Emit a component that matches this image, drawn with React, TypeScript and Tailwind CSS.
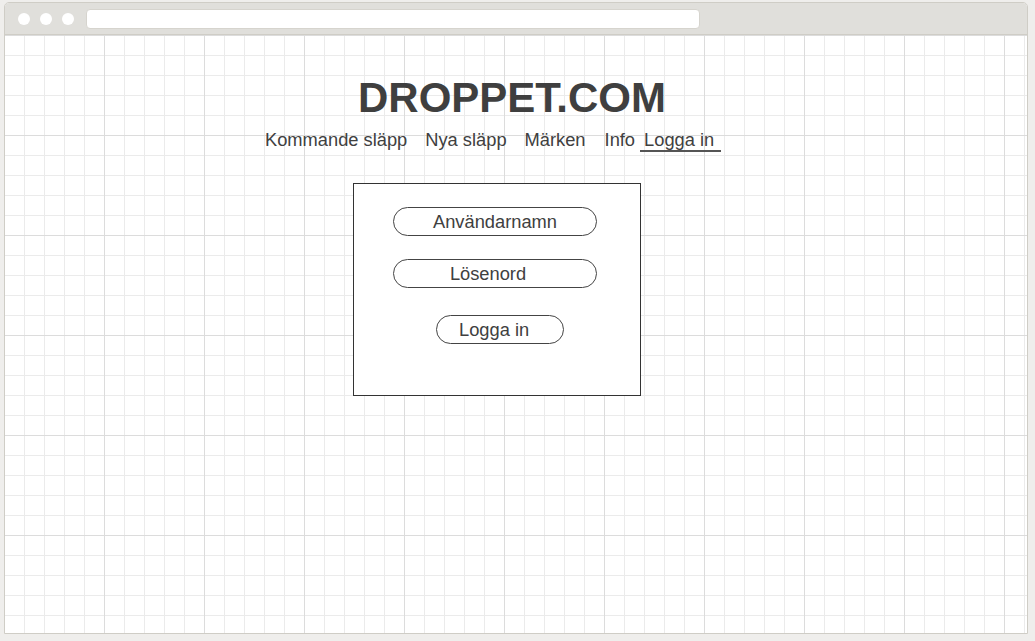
export default function App() {
    return (
        <div className="w-[1035px] h-[641px] overflow-hidden bg-[#efeeec] pt-[2px] pl-[4px] font-[Liberation_Sans,Arial,sans-serif] text-[#404040]">
            {/* browser window */}
            <div className="w-[1024px] h-[632px] flex flex-col border border-[#cfcdc6] rounded-t-[5px] bg-white">
                {/* title bar */}
                <div className="h-[32px] shrink-0 flex items-start bg-[#e0dfdb] border-b border-[#cfcdc6] rounded-t-[4px]">
                    <div className="flex gap-[10px] ml-[13px] mt-[10px]">
                        <span className="block w-[12px] h-[12px] rounded-full bg-white"/>
                        <span className="block w-[12px] h-[12px] rounded-full bg-white"/>
                        <span className="block w-[12px] h-[12px] rounded-full bg-white"/>
                    </div>
                    <div className="ml-[12px] mt-[6px] w-[614px] h-[20px] rounded-[4px] bg-white border border-[#d6d4ce]"/>
                </div>

                {/* page */}
                <div className="flex-1 flex flex-col items-start [background-image:linear-gradient(to_right,#dcdcdc_1px,transparent_1px),linear-gradient(to_bottom,#dcdcdc_1px,transparent_1px),linear-gradient(to_right,#ebebeb_1px,transparent_1px),linear-gradient(to_bottom,#ebebeb_1px,transparent_1px)] [background-size:100px_100px,100px_100px,20px_20px,20px_20px] [background-position:-1px_0]">
                    <h1 className="mt-[42px] ml-[353px] h-[42px] text-[42px] leading-[42px] font-bold text-[#3f3f3f]">
                        DROPPET.COM
                    </h1>

                    <ul className="mt-[10px] ml-[260px] flex items-start text-[18.3px] leading-[21px]">
                        <li><a href="#">Kommande släpp</a></li>
                        <li className="ml-[18px]"><a href="#">Nya släpp</a></li>
                        <li className="ml-[18px]"><a href="#">Märken</a></li>
                        <li className="ml-[19px]"><a href="#">Info</a></li>
                        <li className="ml-[5px] pl-[4px] pr-[7px] border-b-2 border-[#555]">
                            <a href="#">Logga in</a>
                        </li>
                    </ul>

                    {/* login form */}
                    <div className="mt-[31px] ml-[348px] w-[288px] h-[213px] border border-[#333] bg-white flex flex-col items-start text-[18.3px]">
                        <div className="mt-[23px] ml-[39px] w-[204px] h-[29px] rounded-full border border-[#444] flex items-center justify-center">
                            Användarnamn
                        </div>
                        <div className="mt-[23px] ml-[39px] w-[204px] h-[29px] rounded-full border border-[#444] flex items-center justify-center pr-[14px]">
                            Lösenord
                        </div>
                        <button className="mt-[27px] ml-[82px] w-[128px] h-[29px] rounded-full border border-[#444] flex items-center pl-[22px]">
                            Logga in
                        </button>
                    </div>
                </div>
            </div>
        </div>
    );
}
